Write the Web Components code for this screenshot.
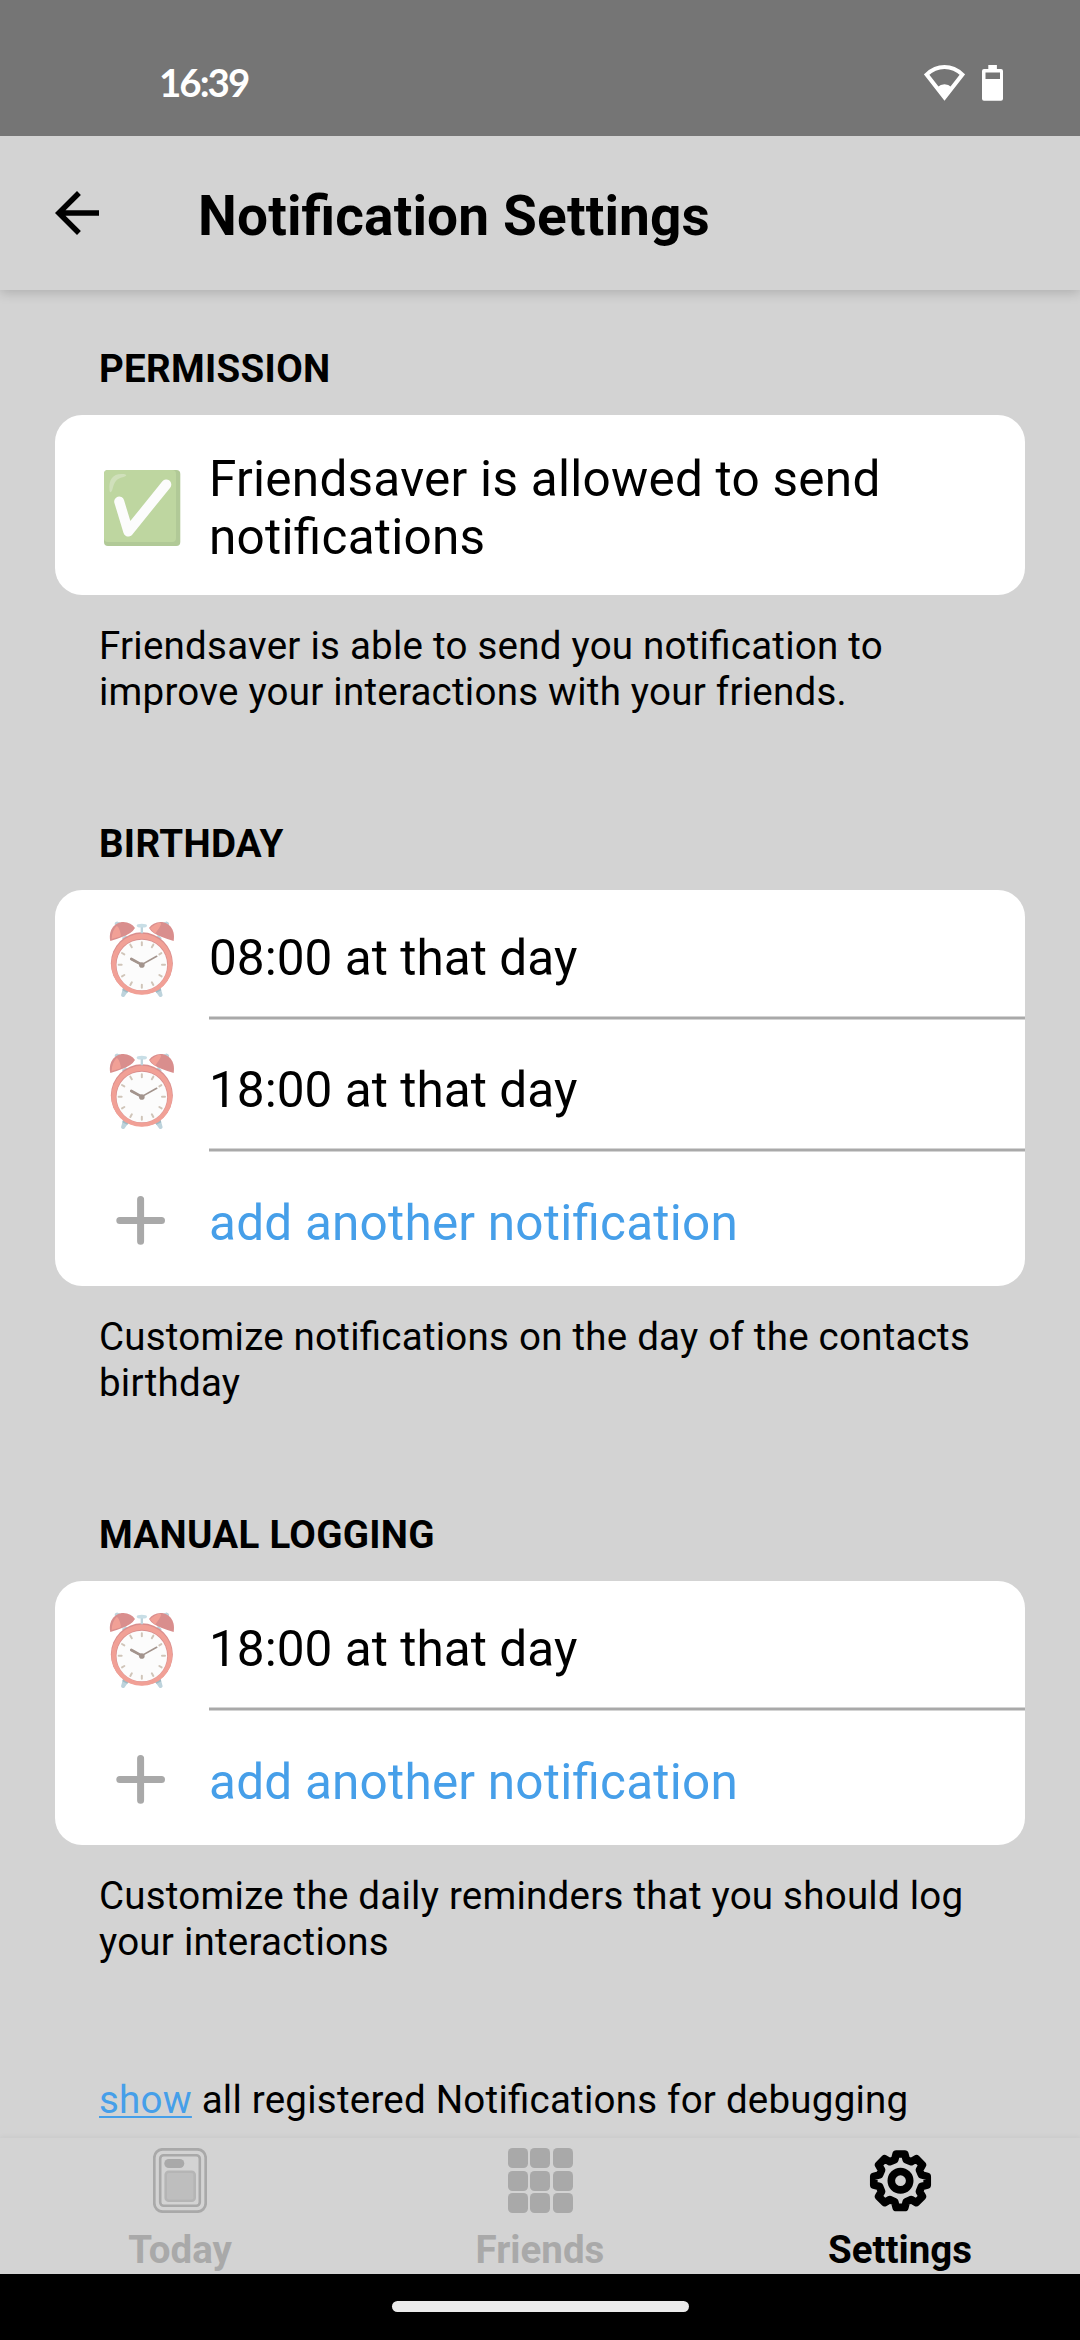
<!DOCTYPE html>
<html lang="en">
<head>
<meta charset="utf-8">
<title>Notification Settings</title>
<style>
html,body{margin:0;padding:0;background:#000}
body{width:1080px;height:2340px;overflow:hidden;font-family:Roboto,"Liberation Sans",sans-serif;font-feature-settings:"liga" 1;color:#000}
</style>
</head>
<body>
<fs-app></fs-app>
<script>
const define = (name, html) => {
  const tpl = document.createElement('template');
  tpl.innerHTML = html;
  customElements.define(name, class extends HTMLElement {
    constructor() {
      super();
      this.attachShadow({ mode: 'open' }).append(tpl.content.cloneNode(true));
    }
  });
};

define('status-bar', `
<style>
:host{display:flex;height:136px;background:#757575;color:#fff;box-sizing:border-box;padding:0 77px 0 159px;justify-content:space-between}
.time{font:700 38.5px/48px Lato,sans-serif;letter-spacing:-2px;margin-top:58px}
.icons{display:flex;gap:17px;margin-top:65px}
svg{display:block}
</style>
<span class="time">16:39</span>
<div class="icons">
<svg width="41" height="36" viewBox="0 0 41 36"><path d="M2.6 9.6Q10.5 2 20.5 2T38.4 9.6L20.5 32.5Z" fill="none" stroke="#fff" stroke-width="4"/><path d="M13 22.5Q20.5 16 28 22.5L20.5 34Z" fill="#fff"/></svg>
<svg width="21" height="36" viewBox="0 0 21 36"><path fill="#fff" fill-rule="evenodd" d="M6.3 0h8.6v4H19a2 2 0 0 1 2 2v27.700a2 2 0 0 1-2 2H2a2 2 0 0 1-2-2V6a2 2 0 0 1 2-2h4.300ZM3.500 7.500v6.500h14.500V7.500Z"/></svg>
</div>`);

define('app-header', `
<style>
:host{display:flex;height:154px;background:#d3d3d3;padding-left:44px;box-shadow:0 3px 11px rgba(0,0,0,.17);z-index:2;box-sizing:border-box}
svg{display:block;margin-top:44px}
h1{margin:48px 0 0 88px;font-size:55px;line-height:64px;font-weight:700;letter-spacing:.14px;white-space:nowrap}
</style>
<svg width="66" height="66" viewBox="0 0 24 24"><path d="M20 11H7.83l5.59-5.59L12 4l-8 8 8 8 1.41-1.41L7.83 13H20v-2z"/></svg>
<h1><slot></slot></h1>`);

define('settings-group', `
<style>
:host{display:block;margin-bottom:106px}
h2{margin:0 0 23px 99px;font-size:38.5px;line-height:46px;font-weight:700;letter-spacing:.3px}
.card{margin:0 55px;background:#fff;border-radius:27px;overflow:hidden}
.note{margin:28px 80px 0 99px;font-size:38.5px;line-height:46px;letter-spacing:.24px}
</style>
<h2><slot name="title"></slot></h2>
<div class="card"><slot></slot></div>
<div class="note"><slot name="note"></slot></div>`);

define('settings-row', `
<style>
:host{display:flex;height:132px;font-size:49.5px;line-height:58px}
.icon{flex:none;margin:20px 19px 0 35px;width:100px;height:100px}
.label{flex:1;height:130px;box-sizing:border-box;padding-top:39px;letter-spacing:.04px;background:linear-gradient(#d4d4d4 1px,#a9a9a9 1px,#a9a9a9 3px,#d4d4d4 3px) bottom/100% 4px no-repeat}
:host([last]) .label{background:none;color:#469fe9;padding-top:40px;letter-spacing:.21px}
:host([tall]){height:180px}
:host([tall]) .icon{margin-top:43px}
:host([tall]) .label{background:none;padding:35px 60px 0 0;height:180px;letter-spacing:.25px}
</style>
<div class="icon"><slot name="icon"></slot></div>
<div class="label"><slot></slot></div>`);

define('check-icon', `
<style>:host{display:block}svg{display:block}</style>
<svg width="100" height="100" viewBox="0 0 100 100">
<rect x="14" y="12" width="76.300" height="76" rx="4" fill="#b1c997"/>
<rect x="14" y="12" width="72" height="72" rx="4" fill="#bed6a0"/>
<path d="M19.500 32c-1-10 3-16 12-16 6 0 6 2 2 3-8 2-9 5-11 12-1 4-3 4-3 1Z" fill="#d0e0bb"/>
<path d="M29.200 43.500 38.300 73.500 76.300 26.500" fill="none" stroke="#fcfcfc" stroke-width="10" stroke-linecap="round" stroke-linejoin="round"/>
</svg>`);

define('alarm-icon', `
<style>:host{display:block}svg{display:block}</style>
<svg width="100" height="100" viewBox="0 0 300 300">
<path d="m99 234-6 22q2 8 10 4l13-18ZM212 234l6 22q-2 8-10 4l-13-18Z" fill="#bdd3dc"/>
<path d="m99 234-2 7 15 7 6-8ZM212 234l2 7-15 7-6-8Z" fill="#9fbac4"/>
<path d="M97 84l10-8 5 8-9 6ZM214 84l-10-8-5 8 9 6Z" fill="#bdd3dc" stroke="#bdd3dc" stroke-width="3"/>
<circle cx="155.500" cy="160" r="93" fill="#d98e8d"/>
<circle cx="155.500" cy="163" r="91.500" fill="#f1a096"/>
<circle cx="155.500" cy="164" r="78" fill="#d98e8d"/>
<circle cx="155.500" cy="165" r="76" fill="#fcfcfc"/>
<path d="M76 45q-3-8 5-9l9 3ZM235 45q3-8-5-9l-9 3Z" fill="#bdd3dc" stroke="#bdd3dc" stroke-width="3"/>
<path d="M61 93C54 56 78 36 100 36q24 1 35 18-9 16-37 26-20 8-37 13ZM251 93C258 56 234 36 212 36q-24 1-35 18 9 16 37 26 20 8 37 13Z" fill="#d98e8d"/>
<path d="M65 87q1-26 15-39 8 2 13 28l-4 4ZM180 55q17-17 32-17 6 4-17 33Z" fill="#f1a096"/>
<path d="M152 50h7v20h-7Z" fill="#bdd3dc"/><ellipse cx="155.500" cy="47" rx="15.500" ry="5.500" fill="#c8dee6"/>
<g stroke="#d0c5b9" stroke-width="6" stroke-linecap="round">
<path d="M155.500 97v9M155.500 224v9M86 164h9M216 164h9M121 104l4.500 7.500M190 104l-4.500 7.500M96 129l7 4M96 199l7-4M215 199l-7-4M121 225l4.500-8M190 225l-4.500-8M208 133l6-3.500"/></g>
<path d="M123 147 155 164 200 139" fill="none" stroke="#a3948d" stroke-width="5" stroke-linecap="round"/>
<path d="m124 147 31 17" stroke="#a3948d" stroke-width="8" stroke-linecap="round"/><circle cx="155.500" cy="165" r="8.500" fill="#a3948d"/>
</svg>`);

define('plus-icon', `
<style>:host{display:block}svg{display:block}</style>
<svg width="100" height="100" viewBox="0 0 100 100"><path d="M50.600 25.500V67.300M29.800 46.400H71.500" stroke="#a9a9a9" stroke-width="7" stroke-linecap="round"/></svg>`);

define('tab-item', `
<style>
:host{flex:1;display:flex;flex-direction:column;align-items:center;color:#a9a9a9;font-size:38.5px;line-height:46px;font-weight:700}
:host([active]){color:#000}
.icon{height:69px;margin-top:10px;margin-bottom:10px}
</style>
<div class="icon"><slot name="icon"></slot></div><span><slot></slot></span>`);

define('today-icon', `
<style>:host{display:block}svg{display:block}</style>
<svg width="54" height="65" viewBox="0 0 54 65" fill="none" stroke="#a9a9a9">
<rect x="1.300" y="1.300" width="51.400" height="62.400" rx="8.500" stroke-width="2.700"/>
<rect x="7.200" y="7.200" width="39.600" height="50.600" rx="3.500" stroke-width="2.600"/>
<rect x="11.300" y="11" width="20" height="9" rx="4.500" fill="#a9a9a9" stroke="none"/>
<rect x="12.700" y="23.700" width="29" height="29" rx="3" fill="#bebebe" stroke="#b5b5b5" stroke-width="2.600"/>
</svg>`);

define('grid-icon', `
<style>
:host{display:grid;grid-template-columns:repeat(3,20px);gap:2.700px;padding-left:.5px}
i{height:20px;border-radius:4.500px;background:#a9a9a9}
</style><i></i><i></i><i></i><i></i><i></i><i></i><i></i><i></i><i></i>`);

/* Cog outline: eight evenly spaced teeth around the hub. */
const cog = Array.from({ length: 8 }, (_, k) =>
  [[-5.800, 21], [-4.300, 26.700], [4.300, 26.700], [5.800, 21]].map(([x, y]) => {
    const a = k * Math.PI / 4;
    return (x * Math.cos(a) + y * Math.sin(a)).toFixed(2) + ' ' + (-y * Math.cos(a) + x * Math.sin(a)).toFixed(2);
  }).join('L')).join('L');
define('gear-icon', `
<style>:host{display:block}svg{display:block}</style>
<svg width="65" height="65" viewBox="-32.500 -32.700 65 65" fill="none" stroke="#000" stroke-linejoin="round">
<path d="M${cog}Z" stroke-width="7.700"/><circle r="9.200" stroke-width="7.600"/></svg>`);

define('tab-bar', `
<style>:host{display:flex;height:136px;background:#d3d3d3;box-shadow:0 0 6px rgba(0,0,0,.07);z-index:2}</style><slot></slot>`);

define('gesture-bar', `
<style>:host{display:flex;height:66px;background:#000;justify-content:center;z-index:3}i{width:297px;height:11px;margin-top:27px;border-radius:6px;background:#ebebeb}</style><i></i>`);

define('fs-app', `
<style>
:host{display:flex;flex-direction:column;width:1080px;height:2340px;overflow:hidden}
status-bar{z-index:3}
main{flex:1;min-height:0;background:#d3d3d3;padding-top:56px;box-sizing:border-box;overflow:hidden}
settings-group:last-of-type{margin-bottom:112px}
p{margin:0 0 0 99px;font-size:38.5px;line-height:46px;letter-spacing:.23px}
a{color:#469fe9;text-decoration:underline;text-decoration-thickness:2px;text-underline-offset:3px;text-decoration-skip-ink:none}
</style>
<status-bar></status-bar>
<app-header>Notification Settings</app-header>
<main>
<settings-group><span slot="title">PERMISSION</span>
<settings-row tall><check-icon slot="icon"></check-icon>Friendsaver is allowed to send<br>notifications</settings-row>
<span slot="note">Friendsaver is able to send you notification to<br>improve your interactions with your friends.</span></settings-group>
<settings-group><span slot="title">BIRTHDAY</span>
<settings-row><alarm-icon slot="icon"></alarm-icon>08:00 at that day</settings-row>
<settings-row><alarm-icon slot="icon"></alarm-icon>18:00 at that day</settings-row>
<settings-row last><plus-icon slot="icon"></plus-icon>add another notification</settings-row>
<span slot="note">Customize notifications on the day of the contacts<br>birthday</span></settings-group>
<settings-group><span slot="title">MANUAL LOGGING</span>
<settings-row><alarm-icon slot="icon"></alarm-icon>18:00 at that day</settings-row>
<settings-row last><plus-icon slot="icon"></plus-icon>add another notification</settings-row>
<span slot="note">Customize the daily reminders that you should log<br>your interactions</span></settings-group>
<p><a>show</a> all registered Notifications for debugging</p>
</main>
<tab-bar>
<tab-item><today-icon slot="icon"></today-icon>Today</tab-item>
<tab-item><grid-icon slot="icon"></grid-icon>Friends</tab-item>
<tab-item active><gear-icon slot="icon"></gear-icon>Settings</tab-item>
</tab-bar>
<gesture-bar></gesture-bar>`);
</script>
</body>
</html>
